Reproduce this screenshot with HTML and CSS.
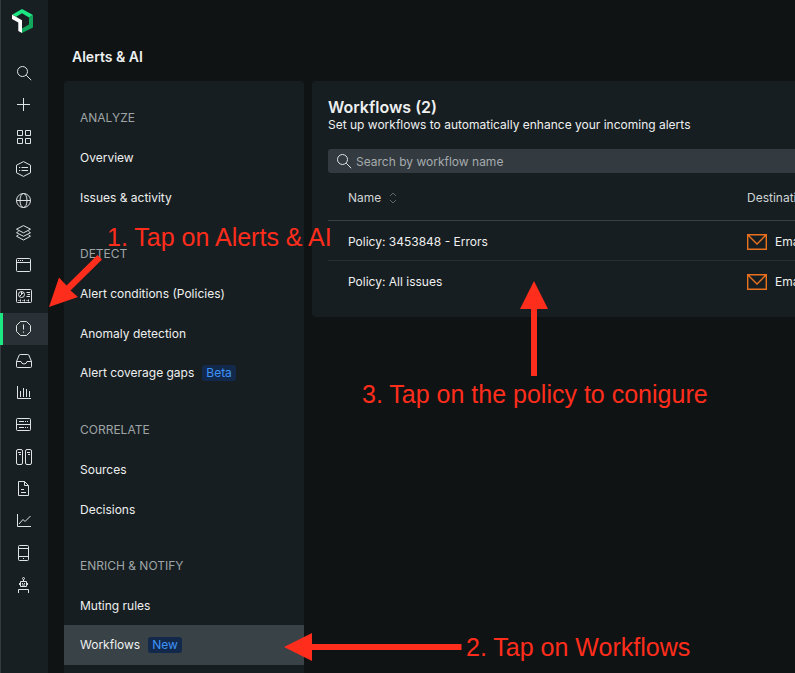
FILE: index.html
```html
<!DOCTYPE html>
<html lang="en">
<head>
<meta charset="utf-8">
<meta name="viewport" content="width=device-width, initial-scale=1">
<title>Alerts &amp; AI</title>
<link rel="stylesheet" href="styles.css">
</head>
<body>
<div class="app">
  <nav class="rail" aria-label="Main">
    <a class="logo" href="#" aria-label="Home">
      <svg width="24" height="26" viewBox="0 0 24 26"><path d="M2.500 6.500 12 1l11 6-4 2.500L12 5.200 6.200 8.700z" fill="#1ce783"/><path d="M23 7v12.500L12 25v-4.500l7-4v-7z" fill="#12a65c"/><path d="M2 6.500 12 12.300V25l-3.700-2v-8.500L2 11z" fill="#fff"/></svg>
    </a>
    <a class="item" href="#" aria-label="Search"><svg class="icon" viewBox="0 0 16 16"><circle cx="6.500" cy="6.500" r="5"/><path d="m10.200 10.200 5 5"/></svg></a>
    <a class="item" href="#" aria-label="Add"><svg class="icon" viewBox="0 0 16 16"><path d="M7.500 1v13M1 7.500h13"/></svg></a>
    <a class="item" href="#" aria-label="Explorer"><svg class="icon" viewBox="0 0 16 16"><path d="M1.500 1.500h5v5h-5zM9.500 1.500h5v5h-5zM1.500 9.500h5v5h-5zM9.500 9.500h5v5h-5z"/></svg></a>
    <a class="item" href="#" aria-label="Entities"><svg class="icon" viewBox="0 0 16 16"><path d="m7.500.6 7 3.600v7.600l-7 3.600-7-3.600V4.200zM3 6.500h1.200M5.500 6.500H12M3 9.500h1.200M5.500 9.500H12"/></svg></a>
    <a class="item" href="#" aria-label="Browser"><svg class="icon" viewBox="0 0 16 16"><circle cx="7.500" cy="7.500" r="7"/><ellipse cx="7.500" cy="7.500" rx="3.500" ry="7"/><path d="M.5 7.500h14"/></svg></a>
    <a class="item" href="#" aria-label="Layers"><svg class="icon" viewBox="0 0 16 16"><path d="m7.500.6 7 3.600-7 3.600-7-3.600zM2.500 6.500l-2 1.200 7 3.600 7-3.600-2-1.200M2.500 10l-2 1.200 7 3.800 7-3.800-2-1.200"/></svg></a>
    <a class="item" href="#" aria-label="Applications"><svg class="icon" viewBox="0 0 16 16"><rect x=".5" y="1.500" width="14" height="13" rx="1"/><path d="M.5 5.500h14M2 3.500h1M4 3.500h1M6 3.500h1"/></svg></a>
    <a class="item" href="#" aria-label="Dashboards"><svg class="icon" viewBox="0 1 16 16"><rect x=".5" y="1.500" width="15" height="13" rx="1"/><circle cx="5.500" cy="6.500" r="3"/><path d="M5.500 3.500v3l2-2M3.500 8.500l2-2M10.500 4.500H14M11.500 6.500H14M10.500 8.500H14M2.500 12.500h1M4.500 11.500v2M6.500 12.500h1M8.500 11.500v2M10.500 12.500h1M12.500 11.500v2"/></svg></a>
    <a class="item active" href="#" aria-label="Alerts &amp; AI"><svg class="icon" viewBox="0 0 16 16"><path d="M4.500.5h6l4 4v6l-4 4h-6l-4-4v-6zM7.500 3.500v5M7.500 10.500v1.200"/></svg></a>
    <a class="item" href="#" aria-label="Inbox"><svg class="icon" viewBox="0 0 16 16"><path d="M.5 8.500 3.200 2q.3-.5 1-.5h7.600q.7 0 1 .5l2.700 6.500v5q0 1-1 1h-13q-1 0-1-1zM.5 8.500H5q.5 2.500 3 2.500t3-2.500h4.500"/></svg></a>
    <a class="item" href="#" aria-label="Metrics"><svg class="icon" viewBox="0 0 16 16"><path d="M1.500 1v12.500H15M4.500 12V6M7.500 12V3M10.500 12V4M13.500 12V6"/></svg></a>
    <a class="item" href="#" aria-label="Infrastructure"><svg class="icon" viewBox="0 0 16 16"><rect x=".5" y="1.500" width="14" height="12" rx="1"/><path d="M.5 7.500h14M3 4.500h5M9 4.500h1M11 4.500h1M3 10.500h5M9 10.500h1M11 10.500h1"/></svg></a>
    <a class="item" href="#" aria-label="Servers"><svg class="icon" viewBox="0 0 16 16"><rect x=".5" y=".5" width="6" height="15" rx="1.500"/><rect x="9.500" y=".5" width="6" height="15" rx="1.500"/><path d="M2 3.500h3M3 5.500h2M11 3.500h3M12 5.500h2"/></svg></a>
    <a class="item" href="#" aria-label="Logs"><svg class="icon" viewBox="0 0 16 16"><path d="M2.500.5h6l4 4v10h-10zM8.500.5v4h4M5 8.500h3M5 11.500h5"/></svg></a>
    <a class="item" href="#" aria-label="Trends"><svg class="icon" viewBox="0 0 16 16"><path d="M1.500 1v12.500H15M3 11l4-4.500 2 2L14.500 3"/></svg></a>
    <a class="item" href="#" aria-label="Mobile"><svg class="icon" viewBox="0 0 16 16"><rect x="2.500" y=".5" width="10" height="15" rx="1"/><path d="M2.500 3.500h10M2.500 11.500h10M7 13.500h1"/></svg></a>
    <a class="item" href="#" aria-label="Synthetics"><svg class="icon" viewBox="0 0 16 16"><circle cx="7.500" cy="1.500" r="1"/><path d="M7.500 2.500v2M4.500 4.500h6v5h-6zM3.500 6v2M11.500 6v2M6 6.500h1M8 6.500h1M6 8h3M2.500 16v-3.500h10V16"/></svg></a>
  </nav>

  <div class="page">
    <h1 class="page-title">Alerts &amp; AI</h1>
    <div class="columns">
      <nav class="menu" aria-label="Alerts &amp; AI">
        <section class="group">
          <h2 class="group-title">ANALYZE</h2>
          <a class="link" href="#">Overview</a>
          <a class="link" href="#">Issues &amp; activity</a>
        </section>
        <section class="group">
          <h2 class="group-title">DETECT</h2>
          <a class="link" href="#">Alert conditions (Policies)</a>
          <a class="link" href="#">Anomaly detection</a>
          <a class="link tagged" href="#">Alert coverage gaps <span class="badge">Beta</span></a>
        </section>
        <section class="group">
          <h2 class="group-title">CORRELATE</h2>
          <a class="link" href="#">Sources</a>
          <a class="link" href="#">Decisions</a>
        </section>
        <section class="group">
          <h2 class="group-title">ENRICH &amp; NOTIFY</h2>
          <a class="link" href="#">Muting rules</a>
          <a class="link tagged selected" href="#">Workflows <span class="badge">New</span></a>
        </section>
      </nav>

      <main class="panel">
        <h2 class="panel-title">Workflows (2)</h2>
        <p class="panel-text">Set up workflows to automatically enhance your incoming alerts</p>
        <label class="search">
          <svg class="icon" viewBox="0 0 16 16" aria-hidden="true"><circle cx="6.500" cy="6.500" r="5"/><path d="m10.200 10.200 5 5"/></svg>
          <input class="search-input" type="search" placeholder="Search by workflow name" aria-label="Search by workflow name">
        </label>
        <table class="table">
          <thead>
            <tr>
              <th><button class="sort" type="button">Name <svg class="sort-icon" width="8" height="12" viewBox="0 0 8 12"><path d="m1 4 3-3 3 3M1 8l3 3 3-3"/></svg></button></th>
              <th class="destination">Destinations</th>
            </tr>
          </thead>
          <tbody>
            <tr>
              <td>Policy: 3453848 - Errors</td>
              <td class="destination"><svg class="mail" width="20" height="16" viewBox="0 0 20 16"><path d="M.7.7h18.600v14.600H.7zM1 1l9 9 9-9"/></svg>Email</td>
            </tr>
            <tr>
              <td>Policy: All issues</td>
              <td class="destination"><svg class="mail" width="20" height="16" viewBox="0 0 20 16"><path d="M.7.7h18.600v14.600H.7zM1 1l9 9 9-9"/></svg>Email</td>
            </tr>
          </tbody>
        </table>
      </main>
    </div>
  </div>

  <svg class="arrow arrow-alerts" width="54" height="54" viewBox="0 0 54 54" aria-hidden="true"><path d="M0 53 10 23.500l7.500 8L48.500 1l4.500 4.500-31.500 31 7.500 6.500z"/></svg>
  <p class="note note-alerts">1. Tap on Alerts &amp; AI</p>
  <svg class="arrow arrow-workflows" width="178" height="28" viewBox="0 0 178 28" aria-hidden="true"><path d="M0 14 28 0v11h149.500v6H28v11z"/></svg>
  <p class="note note-workflows">2. Tap on Workflows</p>
  <svg class="arrow arrow-policy" width="28" height="95" viewBox="0 0 28 95" aria-hidden="true"><path d="M14 0l14 28H17v67h-6V28H0z"/></svg>
  <p class="note note-policy">3. Tap on the policy to conigure</p>
</div>
</body>
</html>
```
FILE: styles.css
```css
* {
  box-sizing: border-box;
}

body,
h1,
h2,
p {
  margin: 0;
}

body {
  background: #0f1313;
  color: #eef0f0;
  font-family: Inter, "Liberation Sans", sans-serif;
  font-size: 12px;
  line-height: 16px;
}

a {
  color: inherit;
  text-decoration: none;
}

.app {
  position: relative;
  display: flex;
  min-height: 100vh;
  overflow: hidden;
  border-bottom: 1px solid #080a0b;
}

.rail {
  flex: none;
  width: 48px;
  background: #181f22;
  border-left: 1px solid #343b3e;
}

.logo {
  display: block;
  height: 57px;
  padding: 8px 9px;
}

.item {
  display: flex;
  align-items: center;
  height: 32px;
  padding-left: 15px;
}

.item.active {
  background: #2a3136;
  box-shadow: -1px 0 #1ce783, inset 2px 0 #1ce783;
}

.icon {
  flex: none;
  width: 16px;
  height: 16px;
  fill: none;
  stroke: #dfe3e3;
}

.page {
  display: flex;
  flex: 1;
  flex-direction: column;
  min-width: 0;
  padding-left: 16px;
}

.page-title {
  padding: 48px 8px 15px;
  font-size: 14px;
  line-height: 18px;
  font-weight: 600;
}

.columns {
  display: flex;
  flex: 1;
  gap: 8px;
}

.menu {
  flex: none;
  width: 240px;
  padding-top: 16px;
  background: #171e21;
  border-radius: 4px 4px 0 0;
}

.group {
  margin-bottom: 16px;
}

.group:last-child {
  margin-bottom: 8px;
}

.group-title,
.link {
  display: flex;
  align-items: center;
  gap: 8px;
  height: 40px;
  padding: 2px 16px 0;
}

.group-title {
  color: #9fa5a7;
  font-size: 12px;
  font-weight: 400;
}

.link.tagged {
  padding-top: 0;
}

.link.selected {
  background: #394247;
}

.badge {
  padding: 0 4px;
  background: #13294b;
  border-radius: 3px;
  color: #3e93f8;
}

.panel {
  flex: 1;
  align-self: flex-start;
  min-width: 0;
  padding: 16px 0 16px 16px;
  background: #171e21;
  border-radius: 4px 0 0 4px;
}

.panel-title {
  font-size: 16px;
  line-height: 20px;
  font-weight: 600;
}

.search {
  display: flex;
  align-items: center;
  gap: 4px;
  height: 24px;
  margin-top: 16px;
  padding-left: 8px;
  background: #333a40;
  border-radius: 3px 0 0 3px;
}

.search-input {
  flex: 1;
  min-width: 0;
  padding: 2px 0 0;
  border: 0;
  outline: 0;
  background: none;
  color: inherit;
  font: inherit;
}

.search-input::placeholder {
  color: #a5abad;
}

.table {
  width: 100%;
  table-layout: fixed;
  border-collapse: separate;
  border-spacing: 0;
}

.table th,
.table td {
  height: 40px;
  padding: 2px 0 0 20px;
  overflow: hidden;
  text-align: left;
  white-space: nowrap;
}

.table th {
  height: 48px;
  border-bottom: 1px solid #394044;
  color: #cfd4d5;
  font-weight: 400;
}

.table tbody tr:not(:last-child) td {
  border-bottom: 1px solid #272f32;
}

.table .destination {
  width: 48px;
  padding-left: 0;
}

.sort {
  display: flex;
  align-items: center;
  gap: 8px;
  padding: 0;
  border: 0;
  background: none;
  color: inherit;
  font: inherit;
}

.sort-icon {
  fill: none;
  stroke: #5d6568;
}

.mail {
  margin-right: 8px;
  fill: none;
  stroke: #e8701f;
  stroke-width: 1.4;
  vertical-align: top;
}

.arrow,
.note {
  position: absolute;
}

.arrow {
  fill: #ff2d1c;
}

.note {
  color: #ff2d1c;
  font-family: "Liberation Sans", Arial, sans-serif;
  font-size: 25px;
  line-height: 28px;
  white-space: nowrap;
}

.arrow-alerts {
  left: 49px;
  top: 254px;
}

.note-alerts {
  left: 107px;
  top: 223px;
}

.arrow-workflows {
  left: 284px;
  top: 633px;
}

.note-workflows {
  left: 466px;
  top: 633px;
}

.arrow-policy {
  left: 520px;
  top: 281px;
}

.note-policy {
  left: 362px;
  top: 380px;
}
```
